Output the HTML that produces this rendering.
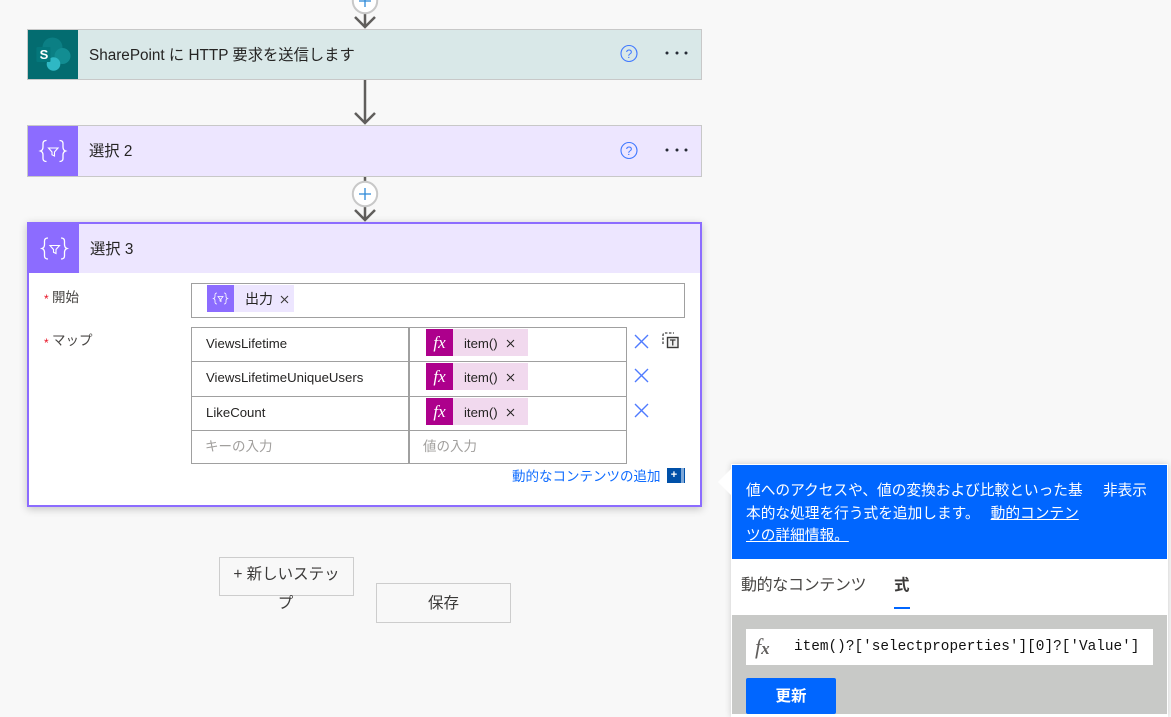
<!DOCTYPE html>
<html lang="ja"><head><meta charset="utf-8"><style>
html,body{margin:0;padding:0}
body{width:1171px;height:717px;overflow:hidden;position:relative;background:#f8f8f8;font-family:"Liberation Sans","Noto Sans CJK JP",sans-serif;font-size:14px;color:#252423}
.a{position:absolute;box-sizing:border-box}
.t{position:absolute;white-space:nowrap;line-height:20px}
svg{position:absolute;overflow:visible}
.card{border:1px solid #c8c8c8}
.fx{background:#ad008c;color:#fff;font:italic 17px/27px "Liberation Serif",serif;text-align:center;width:27px;height:27px;left:0;top:0;position:absolute}
.vc{position:absolute;left:426px;width:102px;height:27px;background:#f1d9ee}
.vc span{position:absolute;left:38px;top:5px;line-height:20px;font-size:13.200px;white-space:nowrap;color:#252423}
</style></head><body>

<!-- connectors -->
<svg width="1171" height="717" style="left:0;top:0">
  <g fill="none" stroke="#605e5c" stroke-width="2.500">
    <path d="M365 12V27M355 17l10 10 10-10"/>
    <path d="M365 80V123M355 113l10 10 10-10"/>
    <path d="M365 177V220M355 210l10 10 10-10"/>
  </g>
  <circle cx="365" cy="1" r="12.200" fill="#fff" stroke="#c8c8c8" stroke-width="2"/>
  <path d="M365 -5V7M359 1H371" stroke="#2b88d8" stroke-width="1.300"/>
  <circle cx="365" cy="194" r="12.200" fill="#fff" stroke="#c8c8c8" stroke-width="2"/>
  <path d="M365 188V200M359 194H371" stroke="#2b88d8" stroke-width="1.300"/>
</svg>

<!-- card 1 -->
<div class="a card" style="left:27px;top:29px;width:675px;height:51px;background:#d9e8e8"></div>
<div class="a" style="left:28px;top:30px;width:50px;height:49px;background:#036c70"></div>
<svg width="50" height="49" style="left:28px;top:30px">
  <circle cx="24.500" cy="17.500" r="10" fill="#0b7f84"/>
  <circle cx="34.500" cy="26" r="8" fill="#128d92"/>
  <circle cx="25.500" cy="34" r="6.800" fill="#2fb8c4"/>
  <rect x="8.500" y="17" width="14" height="15" rx="1" fill="#04777b"/>
  <text x="16" y="29" text-anchor="middle" font-family="Liberation Sans" font-weight="bold" font-size="13" fill="#fff">S</text>
</svg>
<div class="t" style="left:89px;top:46px;font-size:15.300px;color:#252423">SharePoint に HTTP 要求を送信します</div>

<!-- card 2 -->
<div class="a card" style="left:27px;top:125px;width:675px;height:52px;background:#ede6ff"></div>
<div class="a" style="left:28px;top:126px;width:50px;height:50px;background:#8c6cff"></div>
<svg width="50" height="50" style="left:28px;top:126px" fill="none" stroke="#fff" stroke-width="1.300">
  <path d="M18.500 14.500c-2.500 0-3.500 1-3.500 3v3.500c0 2-1 3.500-2.500 4 1.500.5 2.500 2 2.500 4v3.500c0 2 1 3 3.500 3"/>
  <path d="M31.500 14.500c2.500 0 3.500 1 3.500 3v3.500c0 2 1 3.500 2.500 4-1.500.5-2.500 2-2.500 4v3.500c0 2-1 3-3.500 3"/>
  <path d="M20.500 22h9.500l-3.500 4v4l-2.500-1.200V26z" stroke-width="1.100"/>
</svg>
<div class="t" style="left:89px;top:142px;font-size:15.300px">選択 2</div>

<!-- help + dots -->
<svg width="1171" height="300" style="left:0;top:0">
  <g fill="none" stroke="#3f78ff" stroke-width="1.100">
    <circle cx="629" cy="53.500" r="8"/>
    <circle cx="629" cy="150.500" r="8"/>
    <circle cx="628" cy="248" r="8"/>
  </g>
  <g fill="#252a35">
    <circle cx="667" cy="53" r="1.500"/><circle cx="677" cy="53" r="1.500"/><circle cx="686" cy="53" r="1.500"/>
    <circle cx="667" cy="150" r="1.500"/><circle cx="677" cy="150" r="1.500"/><circle cx="686" cy="150" r="1.500"/>
    <circle cx="667" cy="248" r="1.500"/><circle cx="677" cy="248" r="1.500"/><circle cx="686" cy="248" r="1.500"/>
  </g>
  <g font-family="Liberation Sans" font-size="12" fill="#3f78ff" text-anchor="middle">
    <text x="629" y="58">?</text><text x="629" y="155">?</text><text x="628" y="252.500">?</text>
  </g>
</svg>

<!-- card 3 -->
<div class="a" style="left:27px;top:222px;width:675px;height:285px;background:#fff;border:2px solid #8c6cff;box-shadow:0 2px 8px rgba(0,0,0,.22)"></div>
<div class="a" style="left:29px;top:224px;width:671px;height:49px;background:#ede6ff"></div>
<div class="a" style="left:29px;top:224px;width:50px;height:49px;background:#8c6cff"></div>
<svg width="50" height="49" style="left:29px;top:224px" fill="none" stroke="#fff" stroke-width="1.300">
  <path d="M19 14c-2.500 0-3.500 1-3.500 3v3.500c0 2-1 3.500-2.500 4 1.500.5 2.500 2 2.500 4V32c0 2 1 3 3.500 3"/>
  <path d="M32 14c2.500 0 3.500 1 3.500 3v3.500c0 2 1 3.500 2.500 4-1.500.5-2.500 2-2.500 4V32c0 2-1 3-3.500 3"/>
  <path d="M21 21.500h9.500l-3.500 4v4l-2.500-1.200v-2.800z" stroke-width="1.100"/>
</svg>
<div class="t" style="left:90px;top:240px;font-size:15.300px">選択 3</div>

<!-- labels -->
<div class="t" style="left:44px;top:289px;font-size:12px;color:#e81123">*</div>
<div class="t" style="left:52px;top:288px;font-size:13.500px;color:#484644">開始</div>
<div class="t" style="left:44px;top:333px;font-size:12px;color:#e81123">*</div>
<div class="t" style="left:52px;top:331px;font-size:13.500px;color:#484644">マップ</div>

<!-- start input -->
<div class="a" style="left:191px;top:283px;width:494px;height:35px;border:1px solid #a0a0a0"></div>
<div class="a" style="left:207px;top:285px;width:87px;height:27px;background:#ede6ff"></div>
<div class="a" style="left:207px;top:285px;width:27px;height:27px;background:#8c6cff"></div>
<svg width="27" height="27" style="left:207px;top:285px" fill="none" stroke="#fff" stroke-width=".8">
  <path d="M10 8c-1.500 0-2 .7-2 2v1.500c0 1-.5 1.700-1.500 2 1 .3 1.500 1 1.500 2V17c0 1.300.5 2 2 2"/>
  <path d="M17 8c1.500 0 2 .7 2 2v1.500c0 1 .5 1.700 1.500 2-1 .3-1.500 1-1.500 2V17c0 1.300-.5 2-2 2"/>
  <path d="M11 11.500h5l-2 2.500v2.500l-1-.5v-2z"/>
</svg>
<div class="t" style="left:245px;top:289px;font-size:14px">出力</div>
<svg width="10" height="10" style="left:280px;top:295px"><path d="M1 1l7 7M8 1l-7 7" stroke="#3b3a39" stroke-width="1.100"/></svg>

<!-- table -->
<div class="a" style="left:191px;top:327px;width:436px;height:137px;border:1px solid #a0a0a0"></div>
<div class="a" style="left:192px;top:361px;width:434px;height:1px;background:#a0a0a0"></div>
<div class="a" style="left:192px;top:396px;width:434px;height:1px;background:#a0a0a0"></div>
<div class="a" style="left:192px;top:430px;width:434px;height:1px;background:#a0a0a0"></div>
<div class="a" style="left:408px;top:328px;width:2px;height:135px;background:#a0a0a0"></div>

<div class="t" style="left:206px;top:334px;font-size:13.200px">ViewsLifetime</div>
<div class="t" style="left:206px;top:368px;font-size:13.200px">ViewsLifetimeUniqueUsers</div>
<div class="t" style="left:206px;top:403px;font-size:13.200px">LikeCount</div>
<div class="t" style="left:205px;top:437px;font-size:13.500px;color:#a19f9d">キーの入力</div>
<div class="t" style="left:423px;top:437px;font-size:13.500px;color:#a19f9d">値の入力</div>

<div class="vc" style="top:329px"><div class="fx">fx</div><span>item()</span><svg width="10" height="10" style="left:80px;top:10px"><path d="M1 1l7 7M8 1l-7 7" stroke="#252423" stroke-width="1"/></svg></div>
<div class="vc" style="top:363px"><div class="fx">fx</div><span>item()</span><svg width="10" height="10" style="left:80px;top:10px"><path d="M1 1l7 7M8 1l-7 7" stroke="#252423" stroke-width="1"/></svg></div>
<div class="vc" style="top:398px"><div class="fx">fx</div><span>item()</span><svg width="10" height="10" style="left:80px;top:10px"><path d="M1 1l7 7M8 1l-7 7" stroke="#252423" stroke-width="1"/></svg></div>

<svg width="60" height="100" style="left:630px;top:325px">
  <g stroke="#4f7bff" stroke-width="1.400" fill="none">
    <path d="M5 10l13 13M18 10l-13 13"/>
    <path d="M5 44l13 13M18 44l-13 13"/>
    <path d="M5 79l13 13M18 79l-13 13"/>
  </g>
  <path d="M33 19v-9a2 2 0 0 1 2-2h9" fill="none" stroke="#444" stroke-width="1.300" stroke-dasharray="2.500 1.500"/>
  <rect x="37.500" y="12.500" width="10.500" height="10" fill="#f0f0f0" stroke="#3b3a39" stroke-width="1.400"/>
  <path d="M40 15h5.500M42.750 15v5.500" stroke="#3b3a39" stroke-width="1.300" fill="none"/>
</svg>

<!-- add dynamic -->
<div class="t" style="left:512px;top:467px;font-size:13.500px;color:#0f6cff">動的なコンテンツの追加</div>
<div class="a" style="left:667px;top:468px;width:14px;height:15px;background:#0050a8;color:#fff;font:bold 11px/15px 'Liberation Sans',sans-serif;text-align:center">+</div>
<div class="a" style="left:681px;top:468px;width:3px;height:15px;background:#7fa8d8"></div>
<div class="a" style="left:684px;top:468px;width:1px;height:15px;background:#0050a8"></div>

<!-- buttons -->
<div class="a" style="left:219px;top:557px;width:135px;height:39px;border:1px solid #cdcdcd"></div>
<div class="t" style="left:219px;top:561px;width:135px;text-align:center;line-height:28.500px;font-size:15.500px;color:#3b3a39">+ 新しいステッ<br><span style="position:relative;left:-1px">プ</span></div>
<div class="a" style="left:376px;top:583px;width:135px;height:40px;border:1px solid #cdcdcd"></div>
<div class="t" style="left:376px;top:594px;width:135px;text-align:center;font-size:15.500px;color:#3b3a39">保存</div>

<!-- panel -->
<div class="a" style="left:731px;top:464px;width:437px;height:253px;background:#fff;box-shadow:0 0 6px rgba(0,0,0,.18)"></div>
<svg width="16" height="30" style="left:718px;top:468px"><path d="M14 0V28L0 14z" fill="#fff"/></svg>
<div class="a" style="left:732px;top:465px;width:435px;height:94px;background:#0066ff"></div>
<div class="t" style="left:746px;top:480px;line-height:22.500px;font-size:14.700px;color:#fff">値へのアクセスや、値の変換および比較といった基<br>本的な処理を行う式を追加します。 <span style="text-decoration:underline;margin-left:7px">動的コンテン</span><br><span style="text-decoration:underline">ツの詳細情報。</span></div>
<div class="t" style="left:1103px;top:481px;color:#fff;font-size:14.600px">非表示</div>
<div class="t" style="left:741px;top:575px;font-size:16px;color:#484644;letter-spacing:-.35px;padding-top:1px">動的なコンテンツ</div>
<div class="t" style="left:894px;top:576px;font-size:15.500px;font-weight:bold;color:#3b3a39">式</div>
<div class="a" style="left:894px;top:607px;width:16px;height:2px;background:#0066ff"></div>
<div class="a" style="left:732px;top:615px;width:435px;height:99px;background:#c8c9c7"></div>
<div class="a" style="left:746px;top:629px;width:407px;height:36px;background:#fff"></div>
<div class="t" style="left:755px;top:635px;font:italic 22px/24px 'Liberation Serif',serif;color:#605e5c">f<span style="font-size:17px;font-weight:bold">x</span></div>
<div class="t" style="left:794px;top:637px;font:14.400px/20px 'Liberation Mono',monospace;color:#111">item()?['selectproperties'][0]?['Value']</div>
<div class="a" style="left:746px;top:678px;width:90px;height:36px;background:#0066ff;border-radius:2px;color:#fff;font-weight:bold;font-size:15.500px;line-height:37px;text-align:center">更新</div>
</body></html>
